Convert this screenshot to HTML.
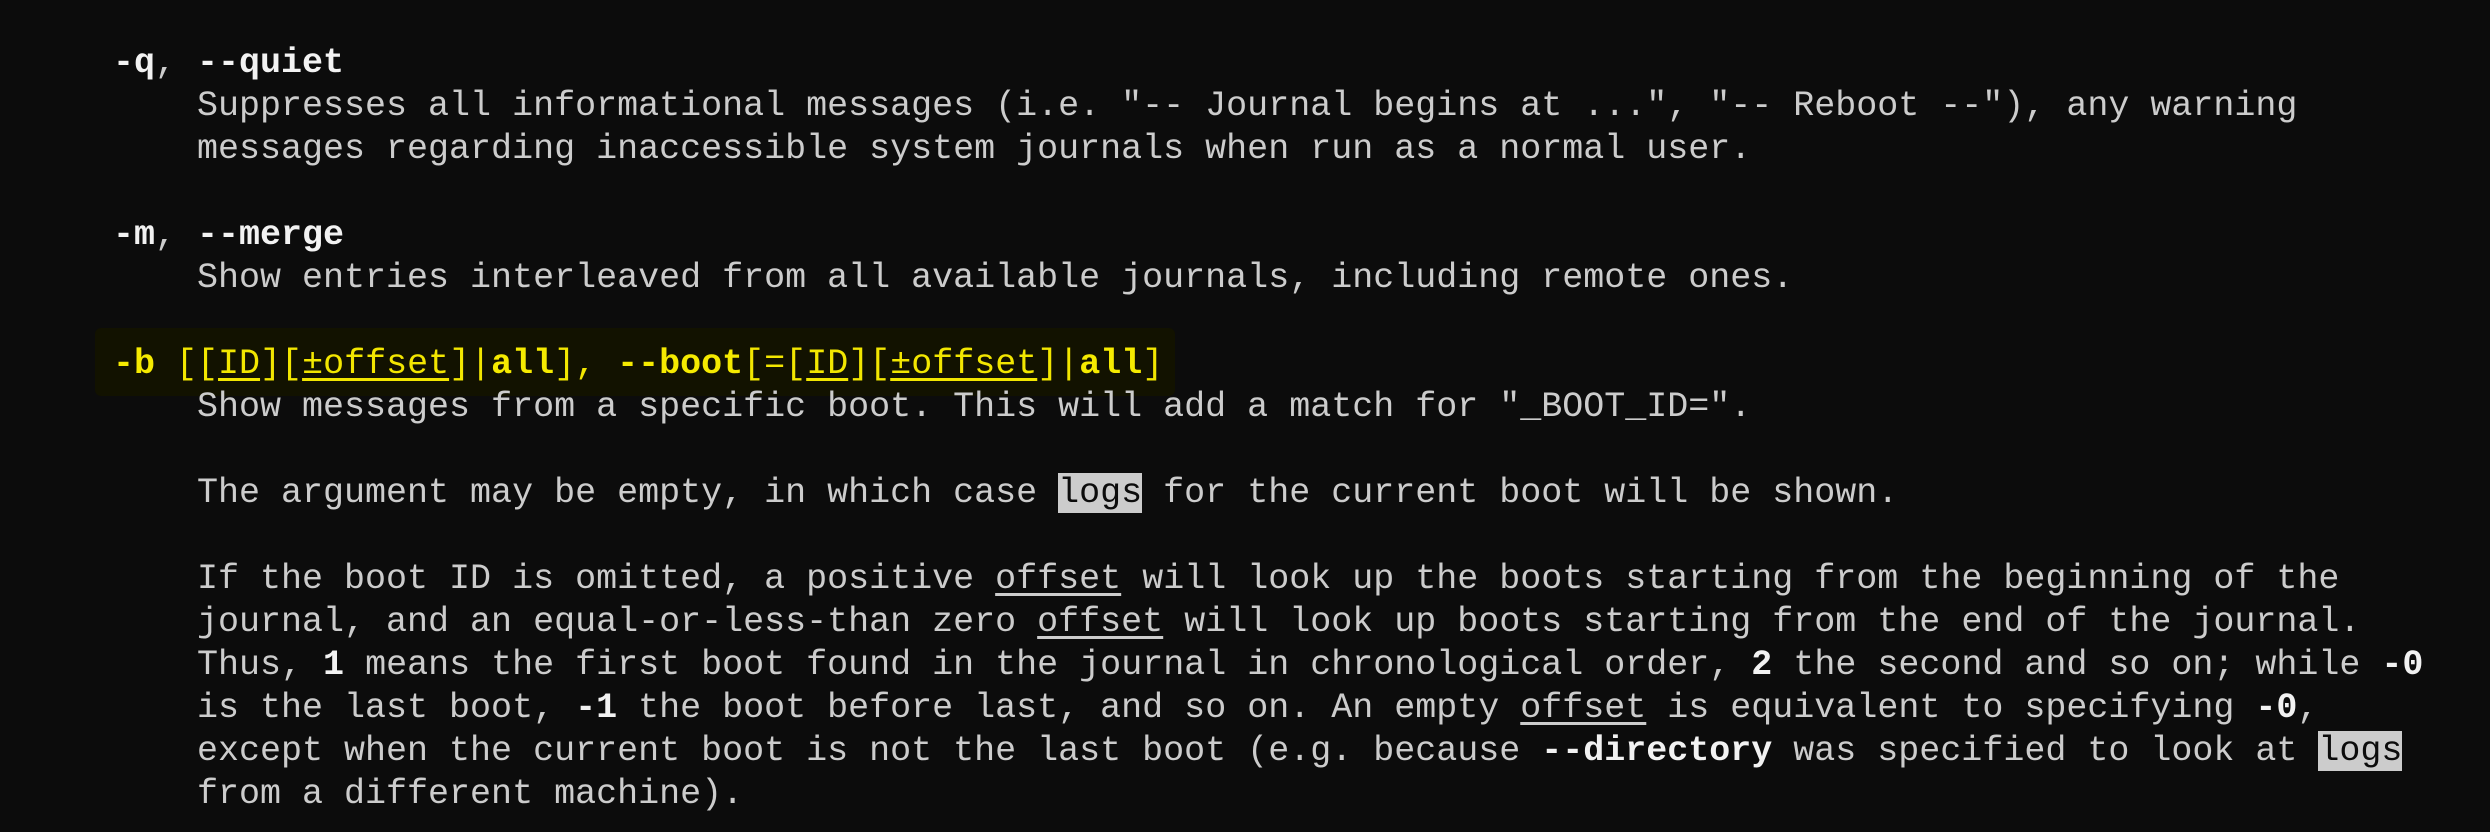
<!DOCTYPE html>
<html><head><meta charset="utf-8">
<style>
html,body{margin:0;padding:0;background:#0c0c0c;}
body{width:2490px;height:832px;overflow:hidden;position:relative;}
pre{margin:0;position:absolute;left:113px;top:42px;font-family:"Liberation Mono","DejaVu Sans Mono",monospace;font-size:35px;line-height:43px;color:#cccccc;white-space:pre;}
b{color:#f2f2f2;font-weight:bold;}
.y{color:#f2e600;}
.y b{color:#f5ea00;}
u{text-decoration:underline;text-underline-offset:5px;}
.hl{background:#cccccc;color:#0c0c0c;}
.band{position:absolute;left:95px;top:328px;width:1080px;height:68px;background:#121200;border-radius:6px;}
</style></head><body>
<div class="band"></div>
<pre><b>-q</b>, <b>--quiet</b>
    Suppresses all informational messages (i.e. "-- Journal begins at ...", "-- Reboot --"), any warning
    messages regarding inaccessible system journals when run as a normal user.

<b>-m</b>, <b>--merge</b>
    Show entries interleaved from all available journals, including remote ones.

<span class="y"><b>-b</b> [[<u>ID</u>][<u>±offset</u>]|<b>all</b>], <b>--boot</b>[=[<u>ID</u>][<u>±offset</u>]|<b>all</b>]</span>
    Show messages from a specific boot. This will add a match for "_BOOT_ID=".

    The argument may be empty, in which case <span class="hl">logs</span> for the current boot will be shown.

    If the boot ID is omitted, a positive <u>offset</u> will look up the boots starting from the beginning of the
    journal, and an equal-or-less-than zero <u>offset</u> will look up boots starting from the end of the journal.
    Thus, <b>1</b> means the first boot found in the journal in chronological order, <b>2</b> the second and so on; while <b>-0</b>
    is the last boot, <b>-1</b> the boot before last, and so on. An empty <u>offset</u> is equivalent to specifying <b>-0</b>,
    except when the current boot is not the last boot (e.g. because <b>--directory</b> was specified to look at <span class="hl">logs</span>
    from a different machine).</pre>
</body></html>
